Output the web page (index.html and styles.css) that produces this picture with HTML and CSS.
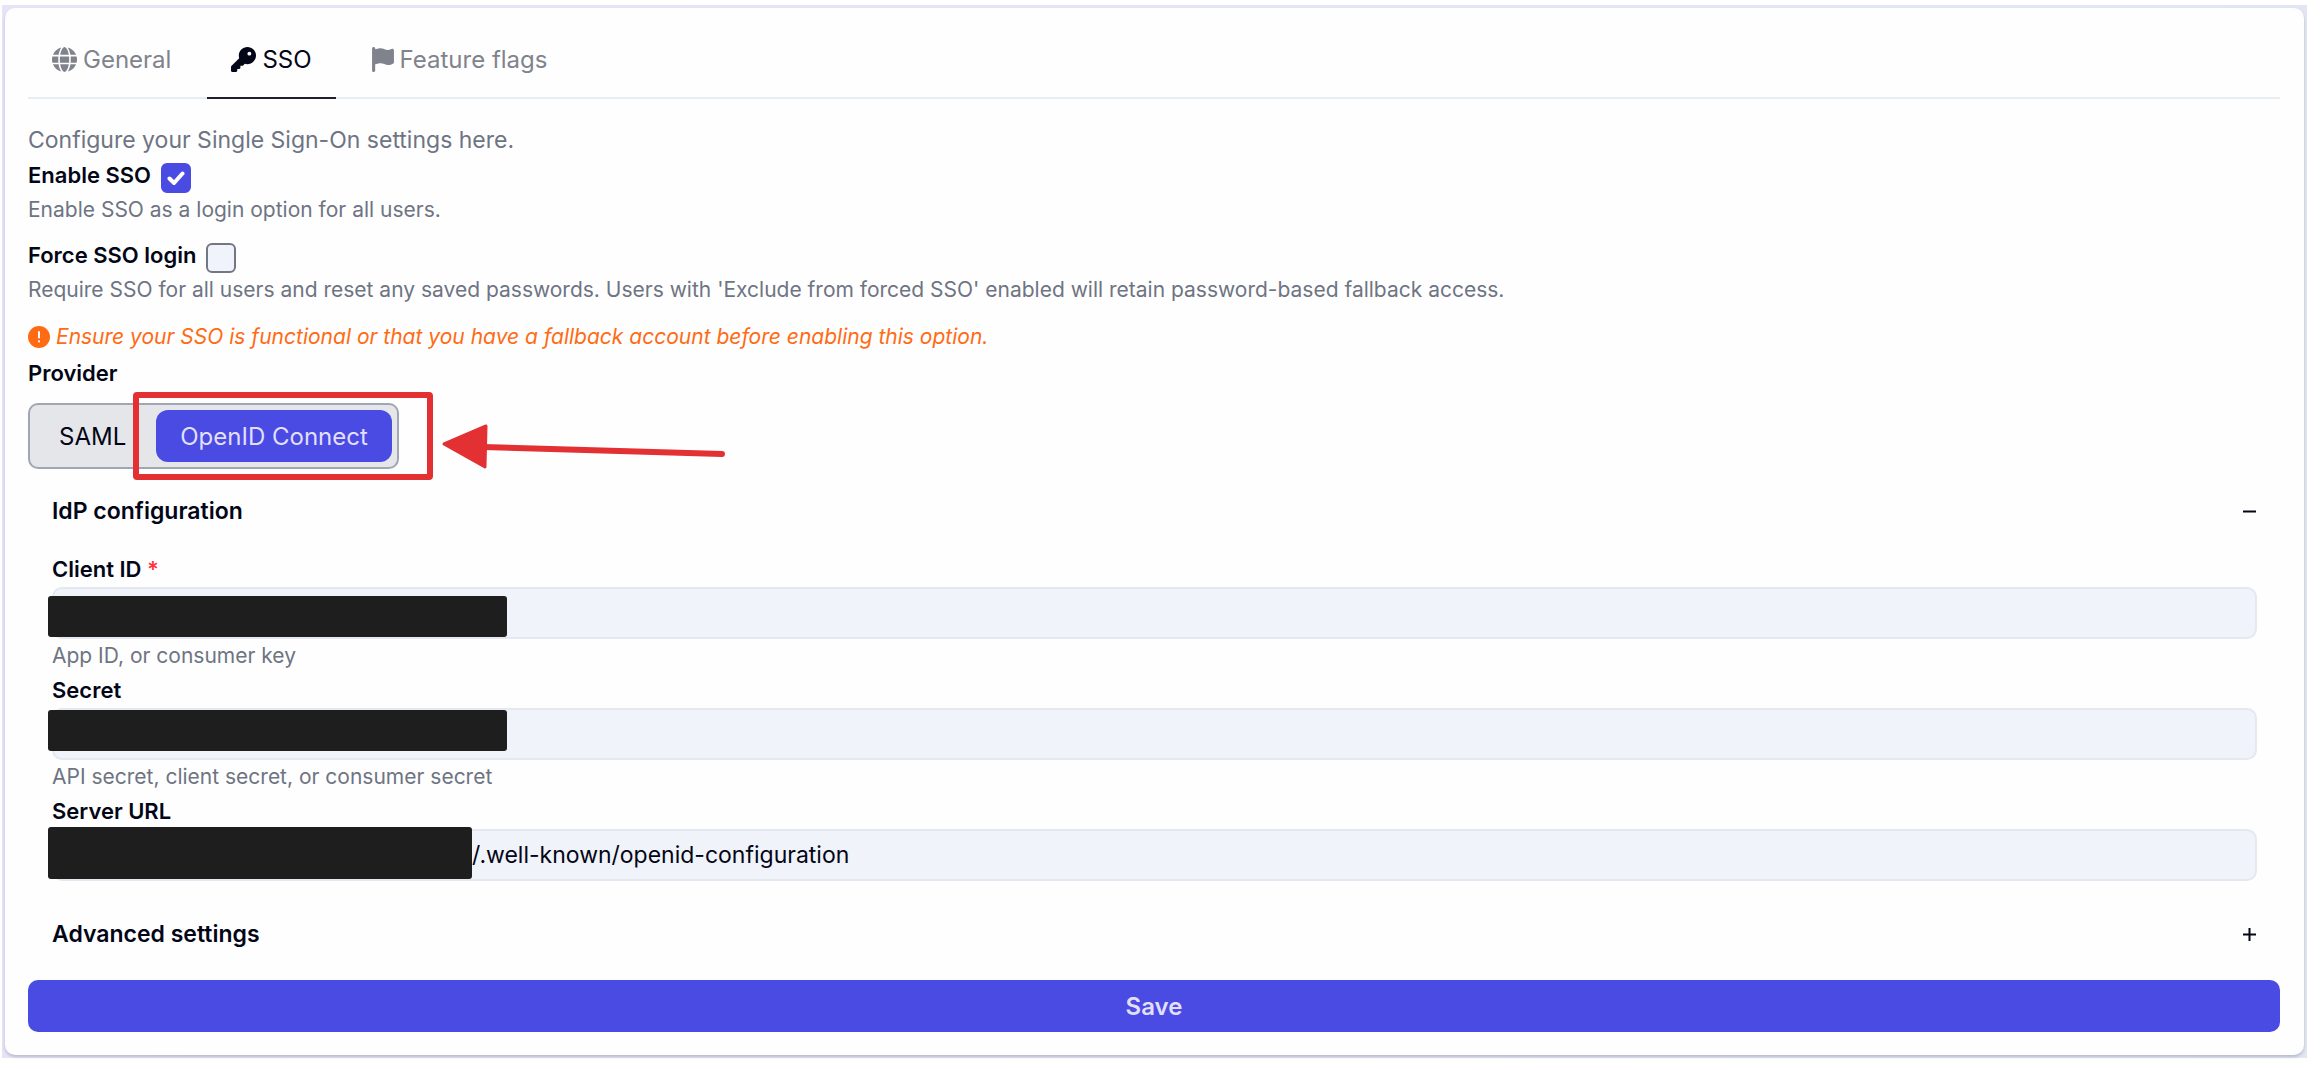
FILE: index.html
```html
<!DOCTYPE html>
<html lang="en">
<head>
<meta charset="utf-8">
<meta name="viewport" content="width=device-width, initial-scale=1">
<title>SSO settings</title>
<link rel="stylesheet" href="styles.css">
</head>
<body>
<div class="frame">
<main class="card">
  <nav class="tabs" role="tablist">
    <button class="tab" type="button" role="tab" aria-selected="false">
      <svg class="icon" viewBox="0 0 512 512" aria-hidden="true"><path d="M352 256c0 22.200-1.200 43.600-3.300 64H163.300c-2.200-20.400-3.300-41.800-3.300-64s1.200-43.600 3.300-64H348.700c2.200 20.400 3.300 41.800 3.300 64zm28.800-64H503.900c5.300 20.500 8.100 41.900 8.100 64s-2.800 43.500-8.100 64H380.800c2.100-20.600 3.200-42 3.200-64s-1.100-43.400-3.200-64zm112.600-32H376.700c-10-63.900-29.800-117.400-55.300-151.600c78.300 20.700 142 77.500 171.900 151.600zm-149.100 0H167.700c6.100-36.400 15.500-68.600 27-94.700c10.500-23.600 22.200-40.700 33.500-51.500C239.400 3.200 248.700 0 256 0s16.600 3.200 27.800 13.800c11.300 10.800 23 27.900 33.500 51.500c11.600 26 20.900 58.200 27 94.700zm-209 0H18.600C48.600 85.900 112.200 29.100 190.600 8.400C165.100 42.600 145.300 96.100 135.300 160zM8.100 192H131.200c-2.100 20.600-3.200 42-3.200 64s1.100 43.400 3.200 64H8.100C2.800 299.500 0 278.100 0 256s2.800-43.500 8.100-64zM194.700 446.600c-11.600-26-20.900-58.200-27-94.600H344.300c-6.100 36.400-15.500 68.600-27 94.600c-10.500 23.600-22.200 40.700-33.500 51.500C272.600 508.800 263.300 512 256 512s-16.600-3.200-27.800-13.800c-11.300-10.800-23-27.900-33.500-51.500zM135.300 352c10 63.900 29.800 117.400 55.300 151.600C112.200 482.900 48.600 426.100 18.600 352H135.300zm358.100 0c-30 74.100-93.600 130.900-171.900 151.600c25.500-34.200 45.200-87.700 55.300-151.600H493.400z"/></svg>
      General
    </button>
    <button class="tab tab-active" type="button" role="tab" aria-selected="true">
      <svg class="icon" viewBox="0 0 512 512" aria-hidden="true"><path d="M336 352c97.200 0 176-78.800 176-176S433.200 0 336 0S160 78.800 160 176c0 18.700 2.900 36.800 8.300 53.700L7 391c-4.500 4.500-7 10.600-7 17v80c0 13.300 10.700 24 24 24h80c13.300 0 24-10.700 24-24V448h40c13.300 0 24-10.700 24-24V384h40c6.400 0 12.500-2.500 17-7l33.300-33.300c16.900 5.400 35 8.300 53.700 8.300zM376 96a40 40 0 1 1 0 80 40 40 0 1 1 0-80z"/></svg>
      SSO
    </button>
    <button class="tab" type="button" role="tab" aria-selected="false">
      <svg class="icon icon-flag" viewBox="0 0 448 512" aria-hidden="true"><path d="M64 32C64 14.300 49.700 0 32 0S0 14.300 0 32V64 368 480c0 17.700 14.300 32 32 32s32-14.300 32-32V352l64.300-16.100c41.100-10.300 84.600-5.500 122.500 13.400c44.200 22.100 95.500 24.800 141.700 7.400l34.700-13c12.500-4.700 20.800-16.600 20.800-30V66.100c0-23-24.200-38-44.800-27.700l-9.600 4.800c-46.300 23.200-100.800 23.200-147.100 0c-35.100-17.600-75.400-22-113.500-12.500L64 48V32z"/></svg>
      Feature flags
    </button>
  </nav>

  <form class="form">
    <p class="intro">Configure your Single Sign-On settings here.</p>

    <div class="option">
      <div class="option-row">
        <label class="label" for="enable-sso">Enable SSO</label>
        <span class="check">
          <input class="check-box" type="checkbox" id="enable-sso" checked>
          <svg class="check-mark" viewBox="0 0 18 14" aria-hidden="true"><path d="M2.500 7.500 7 12 15.500 2.500"/></svg>
        </span>
      </div>
      <p class="help">Enable SSO as a login option for all users.</p>
    </div>

    <div class="option">
      <div class="option-row">
        <label class="label" for="force-sso">Force SSO login</label>
        <span class="check">
          <input class="check-box" type="checkbox" id="force-sso">
        </span>
      </div>
      <p class="help">Require SSO for all users and reset any saved passwords. Users with 'Exclude from forced SSO' enabled will retain password-based fallback access.</p>
    </div>

    <p class="warning">
      <svg class="warning-icon" viewBox="0 0 22 22" aria-hidden="true"><circle cx="11" cy="11" r="11"/><path d="M11 6v5.500M11 15.300v.2"/></svg>
      <em>Ensure your SSO is functional or that you have a fallback account before enabling this option.</em>
    </p>

    <div class="label" id="provider-label">Provider</div>
    <div class="provider">
      <div class="segmented" role="group" aria-labelledby="provider-label">
        <button class="segment" type="button" aria-pressed="false">SAML</button>
        <button class="segment segment-active" type="button" aria-pressed="true">OpenID Connect</button>
      </div>
      <svg class="pointer" viewBox="0 0 600 90" aria-hidden="true">
        <rect x="3" y="3" width="294" height="82" rx="1"/>
        <path d="M350 55 589 62"/>
        <path class="pointer-head" d="M311 52 353 34 352 75Z"/>
      </svg>
    </div>

    <section class="panel">
      <button class="panel-head" type="button" aria-expanded="true">
        IdP configuration
        <svg class="sign" viewBox="0 0 13 13" aria-hidden="true"><path d="M0 6.500h13"/></svg>
      </button>
      <div class="fields">
        <div class="field">
          <label class="label" for="client-id">Client ID <span class="required">*</span></label>
          <div class="control">
            <input class="input" type="text" id="client-id">
            <span class="mask mask-client"></span>
          </div>
          <p class="help">App ID, or consumer key</p>
        </div>
        <div class="field">
          <label class="label" for="secret">Secret</label>
          <div class="control">
            <input class="input" type="text" id="secret">
            <span class="mask mask-secret"></span>
          </div>
          <p class="help">API secret, client secret, or consumer secret</p>
        </div>
        <div class="field">
          <label class="label" for="server-url">Server URL</label>
          <div class="control">
            <input class="input input-url" type="text" id="server-url" value="/.well-known/openid-configuration">
            <span class="mask mask-url"></span>
          </div>
        </div>
      </div>
    </section>

    <section class="panel panel-closed">
      <button class="panel-head" type="button" aria-expanded="false">
        Advanced settings
        <svg class="sign" viewBox="0 0 13 13" aria-hidden="true"><path d="M0 6.500h13M6.500 0v13"/></svg>
      </button>
    </section>

    <button class="save" type="submit">Save</button>
  </form>
</main>
</div>
</body>
</html>
```
FILE: styles.css
```css
* {
  box-sizing: border-box;
}

body {
  margin: 0;
  padding: 5px 13px 12px 2px;
  background: #fff;
  color: #030617;
  font-family: Inter, "Liberation Sans", sans-serif;
  font-size: 22px;
}

button,
input {
  font: inherit;
  color: inherit;
}

button {
  border: 0;
  padding: 0;
  background: none;
}

p {
  margin: 0;
}

.frame {
  padding: 3px;
  background: linear-gradient(to right, #e7e4f8, #e2e6f2);
}

.card {
  padding: 16px 24px 23px 23px;
  border-radius: 10px;
  background: #fefefe;
  box-shadow: 0 2px 3px rgba(60, 65, 90, 0.25);
}

.tabs {
  display: flex;
  gap: 12px;
  border-bottom: 2px solid #e7ebf2;
}

.tab {
  display: flex;
  align-items: center;
  gap: 6px;
  height: 75px;
  margin-bottom: -2px;
  padding: 0 24px 3px;
  border-bottom: 2px solid transparent;
  color: #81838c;
  font-size: 24px;
}

.tab-active {
  border-color: #1e2030;
  color: #030617;
}

.icon {
  width: 25px;
  height: 25px;
  fill: currentColor;
}

.icon-flag {
  width: 22px;
}

.form {
  padding-top: 24px;
}

.intro {
  color: #6e7483;
  font-size: 23px;
  line-height: 35px;
}

.label {
  display: block;
  font-size: 22px;
  font-weight: 600;
  line-height: 35px;
}

.help {
  color: #6e7483;
  font-size: 21px;
  line-height: 34px;
}

.option {
  margin-bottom: 11px;
}

.option-row {
  display: flex;
  align-items: flex-end;
  gap: 10px;
}

.check {
  display: grid;
  place-items: center;
}

.check-box,
.check-mark {
  grid-area: 1 / 1;
}

.check-box {
  appearance: none;
  width: 30px;
  height: 30px;
  margin: 0;
  border: 2px solid #737784;
  border-radius: 6px;
  background: #f0f3f9;
}

.check-box:checked {
  border-color: #494be3;
  background: #494be3;
}

.check-mark {
  width: 18px;
  height: 14px;
  fill: none;
  stroke: #fff;
  stroke-width: 4;
  stroke-linecap: round;
  pointer-events: none;
}

.warning {
  display: flex;
  align-items: center;
  gap: 6px;
  color: #ff6b14;
  font-size: 21px;
  line-height: 38px;
}

.warning-icon {
  width: 22px;
  height: 22px;
  fill: #ff6b14;
  stroke: #fff;
  stroke-width: 2;
  stroke-linecap: round;
}

.warning-icon circle {
  stroke: none;
}

.provider {
  position: relative;
  display: flex;
  margin-top: 12px;
}

.segmented {
  display: flex;
  gap: 6px;
  padding: 5px;
  border: 2px solid #a0a6b3;
  border-radius: 10px;
  background: #e5e6ea;
}

.segment {
  height: 52px;
  padding: 0 24px;
  border-radius: 12px;
  font-size: 24px;
}

.segment-active {
  background: #494be3;
  color: #e2dffa;
}

.pointer {
  position: absolute;
  top: -11px;
  left: 105px;
  width: 600px;
  height: 90px;
  fill: none;
  stroke: #e33033;
  stroke-width: 6;
  stroke-linecap: round;
  stroke-linejoin: round;
  pointer-events: none;
}

.pointer .pointer-head {
  fill: #e33033;
  stroke-width: 3;
}

.panel {
  padding: 24px 23px 0 24px;
}

.panel-head {
  display: flex;
  align-items: center;
  justify-content: space-between;
  width: 100%;
  font-size: 23px;
  font-weight: 600;
  line-height: 36px;
}

.sign {
  width: 13px;
  height: 13px;
  margin-right: 1px;
  stroke: currentColor;
  stroke-width: 2;
}

.fields {
  padding-top: 23px;
}

.required {
  color: #ff3040;
}

.control {
  position: relative;
}

.input {
  display: block;
  width: 100%;
  height: 52px;
  padding: 0 16px;
  border: 2px solid #e3e8f1;
  border-radius: 10px;
  background: #f0f3f9;
  font-size: 23px;
}

.input-url {
  padding-left: 418px;
}

.mask {
  position: absolute;
  left: -4px;
  width: 459px;
  border-radius: 3px;
  background: #1e1e1e;
}

.mask-client {
  top: 9px;
  height: 41px;
}

.mask-secret {
  top: 2px;
  height: 41px;
}

.mask-url {
  top: -2px;
  width: 424px;
  height: 52px;
}

.panel-closed {
  padding: 35px 23px 28px 24px;
}

.save {
  width: 100%;
  height: 52px;
  border-radius: 10px;
  background: #494be3;
  color: #e2dffa;
  font-size: 24px;
  font-weight: 600;
}
```
